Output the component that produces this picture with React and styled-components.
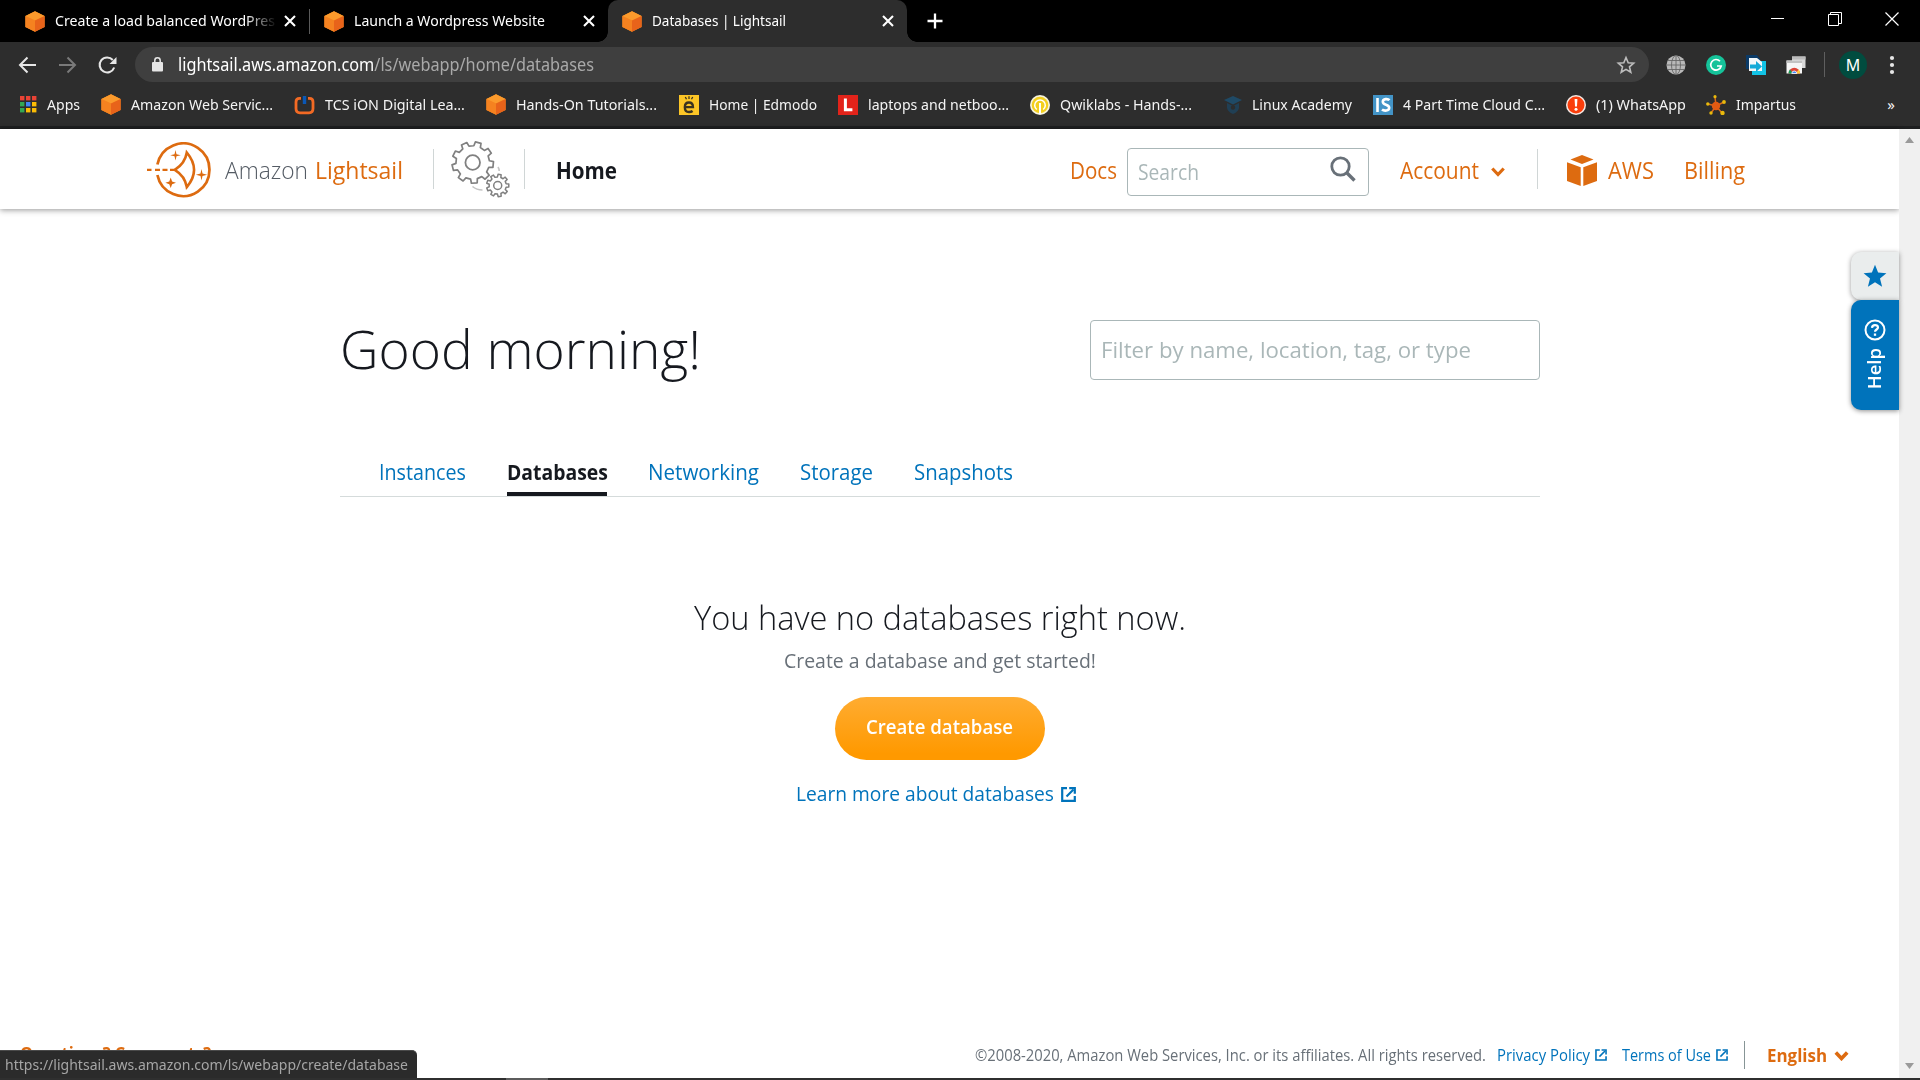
import React from "react";
import styled, { createGlobalStyle, css } from "styled-components";

const Global = createGlobalStyle`
  *, *::before, *::after { box-sizing: border-box; }
  html, body { margin: 0; padding: 0; }
  body { background: #fff; font-family: "Open Sans", "Noto Sans", sans-serif; overflow: hidden; }
  svg { display: block; flex: none; }
  a { text-decoration: none; color: inherit; }
  h1, h2, p { margin: 0; font-weight: inherit; }
`;

const Window = styled.div`
  width: 1920px;
  height: 1080px;
  display: flex;
  flex-direction: column;
  overflow: hidden;
`;

/* A single line of text: $w is its measure, $n the font's own width, condensed to fit. */
const Label = styled.span`
  display: block;
  flex: none;
  white-space: nowrap;
  width: ${(p) => p.$w}px;
  transform: scaleX(${(p) => p.$w / p.$n});
  transform-origin: 0 50%;
`;

/* ---------- browser chrome ---------- */

const TabStrip = styled.div`
  height: 42px;
  flex: none;
  background: #000;
  color: #fff;
  display: flex;
  align-items: stretch;
  padding-left: 10px;
  font: 400 15px "Noto Sans", sans-serif;
`;

const Tab = styled.div`
  display: flex;
  align-items: center;
  width: ${(p) => p.$w}px;
  padding: 0 ${(p) => p.$pr}px 0 ${(p) => p.$pl}px;
  position: relative;
  ${(p) =>
    p.$active &&
    css`
      background: #2d2d2d;
      border-radius: 10px 10px 0 0;
      &::before,
      &::after {
        content: "";
        position: absolute;
        bottom: 0;
        width: 10px;
        height: 10px;
      }
      &::before {
        left: -10px;
        background: radial-gradient(circle at 0 0, transparent 9.5px, #2d2d2d 10px);
      }
      &::after {
        right: -10px;
        background: radial-gradient(circle at 100% 0, transparent 9.5px, #2d2d2d 10px);
      }
    `}
`;

const TabTitle = styled.div`
  flex: 1;
  margin: -2px 0 0 10px;
  overflow: hidden;
  line-height: 24px;
  ${(p) => p.$fade && css`-webkit-mask-image: linear-gradient(90deg, #000 190px, transparent 222px);`}
`;

const TabRule = styled.div`
  width: 1px;
  height: 25px;
  margin: 9px 0 0;
  background: #5a5a5a;
`;

const NewTab = styled.div`
  width: 56px;
  display: grid;
  place-items: center;
`;

const WindowButtons = styled.div`
  margin-left: auto;
  display: flex;
  height: 38px;
  & > div {
    width: 57px;
    display: grid;
    place-items: center;
  }
`;

const Toolbar = styled.div`
  height: 45px;
  flex: none;
  background: #2d2d2d;
  display: flex;
  align-items: center;
  padding-left: 17px;
`;

const NavButton = styled.div`
  width: ${(p) => p.$w || 40}px;
`;

const Address = styled.div`
  width: 1514px;
  height: 35px;
  border-radius: 18px;
  background: #3f3f3f;
  display: flex;
  align-items: center;
  padding: 0 13px 0 17px;
  color: #a9a9a9;
  font: 400 17.5px "Noto Sans", sans-serif;
  line-height: 32px;
  b { font-weight: 400; color: #fff; }
`;

const AddressText = styled.div`
  margin: -2px 0 0 15px;
  flex: 1;
`;

const Extensions = styled.div`
  display: flex;
  align-items: center;
  padding-left: 17px;
`;

const Extension = styled.div`
  width: ${(p) => p.$w || 40}px;
`;

const ToolRule = styled.div`
  width: 1px;
  height: 25px;
  background: #5f5f5f;
  margin-right: 14px;
`;

const Avatar = styled.div`
  width: 28px;
  height: 28px;
  border-radius: 50%;
  background: #014c3f;
  color: #fff;
  font: 400 16px/28px "Noto Sans", sans-serif;
  text-align: center;
  margin-right: 22px;
`;

const Bookmarks = styled.div`
  height: 42px;
  flex: none;
  background: #2d2d2d;
  border-bottom: 3px solid #1e1f20;
  display: flex;
  align-items: center;
  padding: 0 25px 4px 20px;
  color: #f4f4f4;
  font: 400 15px "Noto Sans", sans-serif;
`;

const Bookmark = styled.div`
  display: flex;
  align-items: center;
  gap: 10px;
  margin-right: ${(p) => p.$mr || 21}px;
  line-height: 22px;
  & > span { margin-top: -1px; }
`;

const More = styled.div`
  margin-left: auto;
  line-height: 22px;
  margin-top: -2px;
`;

/* ---------- page ---------- */

const Viewport = styled.div`
  height: 949px;
  flex: none;
  display: flex;
  position: relative;
`;

const Page = styled.div`
  width: 1899px;
  display: flex;
  flex-direction: column;
  color: #16191f;
`;

const Header = styled.header`
  height: 80px;
  flex: none;
  display: flex;
  align-items: center;
  padding: 2px 0 0 147px;
  font-size: 24px;
  line-height: 32px;
  box-shadow: 0 1px 6px rgba(0, 0, 0, 0.42);
  color: #dd6b10;
`;

const HeaderRule = styled.div`
  width: 1px;
  height: 40px;
  margin-top: -2px;
  background: #d0d6d6;
`;

const Brand = styled.div`
  display: flex;
  align-items: center;
  width: 286px;
  gap: 14px;
`;

const BrandName = styled.div`
  display: flex;
  gap: 7px;
  color: #545b64;
  font-weight: 300;
  & > :last-child { color: #dd6b10; font-weight: 400; }
`;

const Gears = styled.div`
  width: 90px;
  padding-left: 16px;
`;

const Home = styled.div`
  margin-left: 31px;
  color: #16191f;
  font-weight: 700;
  width: 514px;
`;

const SearchBox = styled.div`
  width: 242px;
  height: 48px;
  margin: 4px 31px 0 10px;
  padding: 0 12px 2px 10px;
  border: 1px solid #aab7b8;
  border-radius: 4px;
  display: flex;
  align-items: center;
  justify-content: space-between;
  color: #aab7b8;
  font-size: 22px;
  & > svg { margin-bottom: 4px; }
`;

const AccountMenu = styled.div`
  display: flex;
  align-items: center;
  gap: 12px;
  width: 137px;
  & > svg { margin-top: 4px; }
`;

const AwsLink = styled.div`
  display: flex;
  align-items: center;
  gap: 11px;
  margin-left: 29px;
  width: 117px;
`;

const Content = styled.main`
  width: 1200px;
  margin-left: 340px;
  flex: 1;
`;

const TitleRow = styled.div`
  display: flex;
  justify-content: space-between;
  align-items: center;
  height: 60px;
  margin-top: 111px;
`;

const Title = styled.h1`
  font-size: 53px;
  font-weight: 300;
  line-height: 60px;
  margin-top: -3px;
`;

const Filter = styled.div`
  width: 450px;
  height: 60px;
  border: 1px solid #aab7b8;
  border-radius: 4px;
  padding-left: 10px;
  color: #aab7b8;
  font-size: 22.5px;
  line-height: 58px;
`;

const Tabs = styled.nav`
  display: flex;
  margin-top: 66px;
  padding-left: 39px;
  height: 51px;
  gap: 41px;
  border-bottom: 1px solid #d5dbdb;
  font-size: 22px;
`;

const PageTab = styled.a`
  height: 50px;
  line-height: 51px;
  color: ${(p) => (p.$active ? "#16191f" : "#0073bb")};
  font-weight: ${(p) => (p.$active ? 700 : 400)};
  border-bottom: ${(p) => (p.$active ? "4px solid #16191f" : "0")};
`;

const Empty = styled.section`
  display: flex;
  flex-direction: column;
  align-items: center;
  padding-top: 96px;
`;

const EmptyTitle = styled.h2`
  font-size: 33.5px;
  font-weight: 300;
  line-height: 48px;
`;

const EmptyText = styled.p`
  margin-top: 5px;
  font-size: 19.5px;
  line-height: 30px;
  color: #687078;
`;

const CreateButton = styled.button`
  width: 210px;
  height: 63px;
  margin-top: 21px;
  border: 0;
  border-radius: 32px;
  background: linear-gradient(#ffac31, #ff9900 90%);
  color: #fff;
  font: 600 19.5px "Open Sans", sans-serif;
  padding: 0 31px 5px;
  text-align: left;
`;

const LearnMore = styled.a`
  display: flex;
  align-items: center;
  gap: 7px;
  margin: 19px 8px 0 0;
  font-size: 19.5px;
  line-height: 30px;
  color: #0073bb;
`;

const Footer = styled.footer`
  height: 48px;
  display: flex;
  align-items: center;
  padding: 2px 0 0 20px;
  font-size: 15.5px;
  color: #687078;
`;

const Questions = styled.div`
  width: 955px;
  margin-top: -6px;
  color: #dd6b10;
  font-size: 18.5px;
  font-weight: 700;
`;

const FooterLink = styled.a`
  display: flex;
  align-items: center;
  gap: 5px;
  color: #0073bb;
  margin-left: ${(p) => p.$ml}px;
`;

const FooterRule = styled.div`
  width: 1px;
  height: 28px;
  background: #879596;
  margin: 0 22px 0 16px;
`;

const Language = styled.div`
  display: flex;
  align-items: center;
  gap: 7px;
  margin-top: -1px;
  color: #dd6b10;
  font-size: 18px;
  font-weight: 700;
  & > svg { margin-top: 3px; }
`;

const Scrollbar = styled.div`
  width: 21px;
  background: #f0f0f0;
  display: flex;
  flex-direction: column;
  justify-content: space-between;
  align-items: center;
  padding: 8px 0;
`;

const SideDock = styled.aside`
  position: absolute;
  left: 1851px;
  top: 123px;
  width: 48px;
`;

const Favorites = styled.div`
  height: 48px;
  background: #eaeded;
  border-radius: 10px 0 0 10px;
  box-shadow: 0 1px 5px rgba(0, 0, 0, 0.4);
  display: grid;
  place-items: center;
`;

const Help = styled.div`
  position: relative;
  height: 110px;
  background: #0073bb;
  border-radius: 10px 0 0 10px;
  box-shadow: 0 1px 5px rgba(0, 0, 0, 0.45);
  color: #fff;
  display: flex;
  flex-direction: column;
  align-items: center;
  padding-top: 19px;
  gap: 7px;
  font-size: 18.5px;
  font-weight: 600;
`;

const Vertical = styled.span`
  writing-mode: vertical-rl;
  transform: rotate(180deg);
  line-height: 26px;
  margin-right: 2px;
`;

const StatusBubble = styled.div`
  position: absolute;
  left: 0;
  bottom: 0;
  width: 417px;
  height: 28px;
  padding-left: 5px;
  background: #2b2b2b;
  border-top: 1px solid #4a4a4a;
  border-radius: 0 5px 0 0;
  color: #a6a6a6;
  font: 400 15px/27px "Noto Sans", sans-serif;
`;

const Taskbar = styled.div`
  flex: 1;
  background: #2f2f2f;
  padding-left: 506px;
  &::before {
    content: "";
    display: block;
    width: 42px;
    height: 2px;
    background: #5c5c5c;
  }
`;

/* ---------- icons ---------- */

const Cube = () => (
  <svg width="20" height="21" viewBox="0 0 20 21">
    <path d="M10 .3 19.6 5v11L10 20.7.4 16V5z" fill="#f68a1f" />
    <path d="M10 .3 19.6 5 10 9.4.4 5z" fill="#fb9a2c" />
    <path d="M.4 5 10 9.4v11.3L.4 16z" fill="#f58220" />
    <path d="M19.6 5 10 9.4v11.3l9.6-4.7z" fill="#e8631a" />
  </svg>
);

const Close = () => (
  <svg width="12" height="12" viewBox="0 0 12 12" stroke="#fff" strokeWidth="2.1" fill="none">
    <path d="M1 1l10 10M11 1L1 11" />
  </svg>
);

const AppsIcon = () => (
  <svg width="17" height="17" viewBox="0 0 17 17">
    {["#ea4335", "#ea4335", "#ea4335", "#34a853", "#4285f4", "#fbbc05", "#34a853", "#fbbc05", "#fbbc05"].map((c, i) => (
      <rect key={i} x={(i % 3) * 6} y={Math.floor(i / 3) * 6} width="4.4" height="4.4" fill={c} />
    ))}
  </svg>
);

const TcsIcon = () => (
  <svg width="21" height="20" viewBox="0 0 21 20" fill="none">
    <path d="M7 3.300H5.500Q2 3.300 2 7v6.500q0 4.300 4 4.300h9q4 0 4-4.300V7q0-3.700-3.500-3.700H14" stroke="#f36a24" strokeWidth="2.800" />
    <path d="M10.500 1v8" stroke="#0a57b5" strokeWidth="3.400" />
  </svg>
);

const EdmodoIcon = () => (
  <svg width="20" height="20" viewBox="0 0 20 20" fill="none">
    <rect width="20" height="20" fill="#fcc526" />
    <path d="M6 12.200h8c0-3.400-1.600-4.700-4-4.700s-4.200 1.700-4.200 4.700S7.500 17 10 17c1.600 0 2.800-.4 3.600-1" stroke="#3b3320" strokeWidth="2.300" />
    <path d="M6.300 2l1.200 2.300M10 1.300v2.600M13.700 2l-1.200 2.300" stroke="#3b3320" strokeWidth="1.300" />
  </svg>
);

const LIcon = () => (
  <svg width="20" height="20" viewBox="0 0 20 20">
    <rect width="20" height="20" fill="#e2231a" />
    <path d="M7.400 3.500v11.300h7" fill="none" stroke="#fff" strokeWidth="3" />
  </svg>
);

const QwikIcon = () => (
  <svg width="20" height="20" viewBox="0 0 20 20" fill="none">
    <circle cx="10" cy="10" r="10" fill="#f7f3dc" />
    <circle cx="10" cy="10" r="8.300" fill="#f3cf1e" />
    <path d="M6.800 14.500A5.300 5.300 0 1 1 13.200 14.500" stroke="#fff" strokeWidth="1.500" />
    <path d="M10 8v11" stroke="#fff" strokeWidth="2" />
  </svg>
);

const LinuxIcon = () => (
  <svg width="18" height="20" viewBox="0 0 18 20" fill="none">
    <path d="M9 1 18 5 9 9.500 0 5z" fill="#1f4a66" />
    <path d="M3 8v5q1 4 6 6 5-2 6-6V8l-6 3z" fill="#203f54" />
    <circle cx="9" cy="12.500" r="2.200" fill="#2d2d2d" />
  </svg>
);

const IsIcon = () => (
  <svg width="20" height="20" viewBox="0 0 20 20" fill="none">
    <rect width="20" height="20" fill="#4394c7" />
    <path d="M4.500 3v14M16.500 5.200C15 3.600 9.800 3.500 9.800 6.800c0 3.600 6.400 2.400 6.400 6 0 3.300-5.200 3.400-7.200 1.700" stroke="#fff" strokeWidth="2.600" />
  </svg>
);

const AlertIcon = () => (
  <svg width="20" height="20" viewBox="0 0 20 20">
    <circle cx="10" cy="10" r="10" fill="#f5e9e4" />
    <circle cx="10" cy="10" r="8.500" fill="#fa3e0c" />
    <path d="M8.600 4h2.800l-.4 7.600H9z" fill="#fff" />
    <circle cx="10" cy="14.300" r="1.500" fill="#fff" />
  </svg>
);

const ImpartusIcon = () => (
  <svg width="20" height="20" viewBox="0 0 20 20" fill="none">
    <path d="M10 11 9 2M10 11 18 7M10 11 2 9M10 11 5 18M10 11l6 7" stroke="#d9691a" strokeWidth="1.500" />
    <circle cx="10" cy="11" r="4.200" fill="#e35a12" />
    <g fill="#e8b90c">
      <circle cx="9" cy="1.700" r="1.600" /><circle cx="18" cy="7" r="1.900" /><circle cx="1.800" cy="9" r="1.700" />
      <circle cx="5" cy="18" r="1.700" /><circle cx="16.500" cy="18" r="2.200" />
    </g>
  </svg>
);

const LightsailLogo = () => (
  <svg width="64" height="56" viewBox="0 0 64 56" fill="none" stroke="#dd6b10">
    <path d="M10.400 22.500A26.300 26.300 0 1 1 10.400 33" strokeWidth="2.700" />
    <path d="M0 27.800h4.500M8 27.800h5M15.500 27.800h5M23 27.800h6" strokeWidth="2.300" />
    <path d="M39.800 10.500q14.500 17.300 0 34.600Q38 34 27.800 27.800 38 21.600 39.800 10.500z" strokeWidth="2.600" />
    <g fill="#dd6b10" stroke="none">
      <path d="M28.500 8l1 4.300 4.300 1-4.300 1-1 4.300-1-4.300-4.300-1 4.300-1z" />
      <path d="M23.700 35.500l1.400 3.900 3.900 1.400-3.900 1.400-1.400 3.900-1.400-3.900-3.900-1.400 3.900-1.400z" />
      <path d="M54.500 27l1 4.600 4.600 1.200-4.600 1.200-1 4.600-1-4.600-4.600-1.200 4.600-1.200z" />
    </g>
  </svg>
);

const gearPath = (cx, cy, outer, inner, teeth, turn) => {
  const pts = [];
  for (let i = 0; i < teeth; i++) {
    [[-0.29, inner], [-0.2, outer], [0.2, outer], [0.29, inner]].forEach(([o, r]) => {
      const a = ((i + o) / teeth) * Math.PI * 2 + turn;
      pts.push(`${(cx + r * Math.cos(a)).toFixed(2)} ${(cy + r * Math.sin(a)).toFixed(2)}`);
    });
  }
  return `M${pts.join("L")}z`;
};

const GearsIcon = () => (
  <svg width="60" height="58" viewBox="0 0 60 58" fill="none" stroke="#808080" strokeLinejoin="round">
    <path d={gearPath(22.7, 21.5, 20.8, 16.8, 9, -1.3)} strokeWidth="1.700" />
    <circle cx="22.700" cy="21.500" r="7.300" strokeWidth="1.800" />
    <path d={gearPath(47.700, 44.500, 11.200, 8.600, 9, -1.4)} strokeWidth="1.500" />
    <circle cx="47.700" cy="44.500" r="4" strokeWidth="1.500" />
    <path d="M22.500 45.500q4 3.500 10 3.500M48 26q1.200 2 1.200 4" stroke="#c4c4c4" strokeWidth="1.600" />
  </svg>
);

const AwsCube = () => (
  <svg width="30" height="31" viewBox="0 0 30 31" fill="#dd6b10">
    <path d="M15 0 26.500 4.600 15 9 3.500 4.600z" />
    <path d="M0 7.300 13.700 12.300V31L0 26z" />
    <path d="M30 7.300 16.300 12.300V31L30 26z" />
  </svg>
);

const Chevron = ({ w = 14, h = 10, sw = 3.2 }) => (
  <svg width={w} height={h} viewBox="0 0 14 10" fill="none" stroke="#dd6b10" strokeWidth={sw}>
    <path d="M1.300 1.500 7 7.500 12.700 1.500" />
  </svg>
);

const ExternalIcon = ({ s = 15, sw = 2.2 }) => (
  <svg width={s} height={s} viewBox="0 0 15 15" fill="none" stroke="#0073bb" strokeWidth={sw}>
    <path d="M6 1.200H1.200v12.600h12.600V9" />
    <path d="M5.500 9.500 12.500 2.500" />
    <path d="M8.200 1.200h5.600v5.600" />
  </svg>
);

const bookmarks = [
  { name: "Apps", Icon: AppsIcon, w: 33, n: 35.2, mr: 21 },
  { name: "Amazon Web Servic...", Icon: Cube, w: 142, n: 150.2 },
  { name: "TCS iON Digital Lea...", Icon: TcsIcon, w: 140, n: 146.9 },
  { name: "Hands-On Tutorials...", Icon: Cube, w: 141, n: 147.9, mr: 22 },
  { name: "Home | Edmodo", Icon: EdmodoIcon, w: 108, n: 117.7 },
  { name: "laptops and netboo...", Icon: LIcon, w: 141, n: 149.7 },
  { name: "Qwiklabs - Hands-...", Icon: QwikIcon, w: 132, n: 138.8, mr: 32 },
  { name: "Linux Academy", Icon: LinuxIcon, w: 100, n: 106.7 },
  { name: "4 Part Time Cloud C...", Icon: IsIcon, w: 142, n: 150.4 },
  { name: "(1) WhatsApp", Icon: AlertIcon, w: 90, n: 93.8, mr: 20 },
  { name: "Impartus", Icon: ImpartusIcon, w: 60, n: 64.8 },
];

const pageTabs = [
  { name: "Instances", w: 87, n: 97.1 },
  { name: "Databases", w: 100, n: 113.5 },
  { name: "Networking", w: 111, n: 118.6 },
  { name: "Storage", w: 73, n: 78.7 },
  { name: "Snapshots", w: 99, n: 106.8 },
];

export default function App() {
  return (
    <Window>
      <Global />
      <TabStrip>
        <Tab $w={299} $pl={15} $pr={13}>
          <Cube />
          <TabTitle $fade><Label $w={220} $n={233.3}>Create a load balanced WordPres</Label></TabTitle>
          <Close />
        </Tab>
        <TabRule />
        <Tab $w={298} $pl={14} $pr={13}>
          <Cube />
          <TabTitle><Label $w={191} $n={203.5}>Launch a Wordpress Website</Label></TabTitle>
          <Close />
        </Tab>
        <Tab $w={299} $pl={14} $pr={13} $active>
          <Cube />
          <TabTitle><Label $w={134} $n={148.7}>Databases | Lightsail</Label></TabTitle>
          <Close />
        </Tab>
        <NewTab>
          <svg width="16" height="16" viewBox="0 0 16 16" stroke="#fff" strokeWidth="2.300"><path d="M8 .5v15M.5 8h15" /></svg>
        </NewTab>
        <WindowButtons>
          <div><svg width="13" height="13" viewBox="0 0 13 13" stroke="#fff"><path d="M0 5.500h13" /></svg></div>
          <div><svg width="14" height="14" viewBox="0 0 14 14" stroke="#fff" fill="none"><path d="M.5 2.500h10v11H.5zM2.500 2.500v-2h11v11h-3" /></svg></div>
          <div><svg width="14" height="14" viewBox="0 0 14 14" stroke="#fff" strokeWidth="1.200"><path d="M.5.5l13 13M13.500.5l-13 13" /></svg></div>
        </WindowButtons>
      </TabStrip>
      <Toolbar>
        <NavButton>
          <svg width="20" height="20" viewBox="0 0 20 20" fill="none" stroke="#e6e6e6" strokeWidth="2"><path d="M19 10H3M10.500 2.500 3 10l7.500 7.500" /></svg>
        </NavButton>
        <NavButton>
          <svg width="20" height="20" viewBox="0 0 20 20" fill="none" stroke="#7a7a7a" strokeWidth="2"><path d="M2 10h16M10.500 2.500 18 10l-7.500 7.500" /></svg>
        </NavButton>
        <NavButton $w={38}>
          <svg width="20" height="20" viewBox="0 0 20 20" fill="none" stroke="#e6e6e6" strokeWidth="2.100"><path d="M17.200 12.500A7.500 7.500 0 1 1 15.800 5" /><path d="M19.500 2v7h-7z" fill="#e6e6e6" stroke="none" /></svg>
        </NavButton>
        <Address>
          <svg width="11" height="15" viewBox="0 0 11 15"><rect y="5" width="11" height="9.500" rx="1" fill="#e6e6e6" /><path d="M2.800 6V3.500a2.700 2.700 0 0 1 5.400 0V6" fill="none" stroke="#e6e6e6" strokeWidth="1.500" /></svg>
          <AddressText>
            <Label $w={416} $n={447.4}><b>lightsail.aws.amazon.com</b>/ls/webapp/home/databases</Label>
          </AddressText>
          <svg width="20" height="20" viewBox="0 0 20 20" fill="none" stroke="#bdbdbd" strokeWidth="1.600"><path d="M10 2.500l2.200 5.200 5.500.5-4.200 3.700 1.300 5.400-4.800-2.900-4.800 2.900 1.300-5.400L2.300 8.200l5.500-.5z" /></svg>
        </Address>
        <Extensions>
          <Extension>
            <svg width="20" height="20" viewBox="0 0 20 20" fill="none"><circle cx="10" cy="10" r="9.500" fill="#b9b9b9" /><g stroke="#666" strokeWidth=".9"><ellipse cx="10" cy="10" rx="4.500" ry="9.500" /><path d="M10 .5v19M.5 10h19M2 5.500h16M2 14.500h16" /></g></svg>
          </Extension>
          <Extension>
            <svg width="20" height="20" viewBox="0 0 20 20" fill="none"><circle cx="10" cy="10" r="10" fill="#15c39a" /><path d="M14 6.300A5.300 5.300 0 1 0 15.200 11H11" stroke="#fff" strokeWidth="1.700" /></svg>
          </Extension>
          <Extension>
            <svg width="20" height="20" viewBox="0 0 20 20"><path d="M0 0h11l3 4v10H0z" fill="#0b3a66" /><path d="M6 6h14v14H6z" fill="#12c3e6" /><path d="M3 3h8l5 4v9H3z" fill="#f2f7fa" /><path d="M4 9.500h6V6l6 5.500-6 5.500v-3.500H4z" fill="#12a9d8" /></svg>
          </Extension>
          <Extension $w={38}>
            <svg width="20" height="18" viewBox="0 0 20 18"><path d="M6 .5h13.500V12H6z" fill="#d9d9d9" /><path d="M6 .5h13.500v3H6z" fill="#bbb" /><path d="M.5 4.500h15.500V17.500H.5z" fill="#f5f5f5" /><path d="M.5 4.500H16v2.500H.5z" fill="#c2c2c2" /><path d="M2.500 17.500a5.800 5.800 0 0 1 11.600 0z" fill="#db4437" /><path d="M2.500 17.500q0-2.500 1.500-4l3 4z" fill="#0f9d58" /><path d="M14.100 17.500q0-2.500-1.500-4l-3 4z" fill="#ffcd40" /><path d="M5.800 17.500a2.500 2.500 0 0 1 5 0z" fill="#4285f4" stroke="#fff" strokeWidth=".8" /></svg>
          </Extension>
          <ToolRule />
          <Avatar>M</Avatar>
          <svg width="6" height="20" viewBox="0 0 6 20" fill="#e6e6e6"><circle cx="3" cy="3" r="2.100" /><circle cx="3" cy="10" r="2.100" /><circle cx="3" cy="17" r="2.100" /></svg>
        </Extensions>
      </Toolbar>
      <Bookmarks>
        {bookmarks.map(({ name, Icon, w, n, mr }) => (
          <Bookmark key={name} $mr={mr}>
            <Icon />
            <Label $w={w} $n={n}>{name}</Label>
          </Bookmark>
        ))}
        <More>»</More>
      </Bookmarks>
      <Viewport>
        <Page>
          <Header>
            <Brand>
              <LightsailLogo />
              <BrandName>
                <Label $w={83} $n={87.7}>Amazon</Label>
                <Label $w={88} $n={91.8}>Lightsail</Label>
              </BrandName>
            </Brand>
            <HeaderRule />
            <Gears><GearsIcon /></Gears>
            <HeaderRule />
            <Home><Label $w={61} $n={71}>Home</Label></Home>
            <Label $w={47} $n={54.8}>Docs</Label>
            <SearchBox>
              <Label $w={61} $n={69.7}>Search</Label>
              <svg width="26" height="26" viewBox="0 0 26 26" fill="none" stroke="#687078" strokeWidth="2.800"><circle cx="10.500" cy="10.500" r="8.700" /><path d="M16.500 16.500l8 8" strokeWidth="3.400" /></svg>
            </SearchBox>
            <AccountMenu><Label $w={79} $n={90.6}>Account</Label><Chevron /></AccountMenu>
            <HeaderRule />
            <AwsLink><AwsCube /><Label $w={46} $n={50.5}>AWS</Label></AwsLink>
            <Label $w={61} $n={67.5}>Billing</Label>
          </Header>
          <Content>
            <TitleRow>
              <Title><Label $w={361} $n={359.2}>Good morning!</Label></Title>
              <Filter><Label $w={370} $n={374.9}>Filter by name, location, tag, or type</Label></Filter>
            </TitleRow>
            <Tabs>
              {pageTabs.map(({ name, w, n }) => (
                <PageTab key={name} $active={name === "Databases"}>
                  <Label $w={w} $n={n}>{name}</Label>
                </PageTab>
              ))}
            </Tabs>
            <Empty>
              <EmptyTitle><Label $w={492} $n={505.9}>You have no databases right now.</Label></EmptyTitle>
              <EmptyText><Label $w={312} $n={312.9}>Create a database and get started!</Label></EmptyText>
              <CreateButton><Label $w={147} $n={154}>Create database</Label></CreateButton>
              <LearnMore><Label $w={258} $n={262.1}>Learn more about databases</Label><ExternalIcon /></LearnMore>
            </Empty>
          </Content>
          <Footer>
            <Questions><Label $w={191} $n={215.8}>Questions? Comments?</Label></Questions>
            <Label $w={511} $n={536.2}>©2008-2020, Amazon Web Services, Inc. or its affiliates. All rights reserved.</Label>
            <FooterLink $ml={11}><Label $w={93} $n={96.8}>Privacy Policy</Label><ExternalIcon s={12} sw={2} /></FooterLink>
            <FooterLink $ml={15}><Label $w={89} $n={95.3}>Terms of Use</Label><ExternalIcon s={12} sw={2} /></FooterLink>
            <FooterRule />
            <Language><Label $w={60} $n={63.8}>English</Label><Chevron w={15} h={10} sw={3.6} /></Language>
          </Footer>
        </Page>
        <Scrollbar>
          <svg width="9" height="7" viewBox="0 0 9 7" fill="#9a9a9a"><path d="M0 6h9L4.500 0z" /></svg>
          <svg width="9" height="7" viewBox="0 0 9 7" fill="#9a9a9a"><path d="M0 0h9L4.500 6z" /></svg>
        </Scrollbar>
        <SideDock>
          <Favorites>
            <svg width="24" height="24" viewBox="0 0 24 24" fill="#0073bb"><path d="M12 .8l3.100 7.800 8.300.6-6.400 5.300 2.100 8.200-7.100-4.500-7.100 4.500L7 14.500.6 9.200l8.300-.6z" /></svg>
          </Favorites>
          <Help>
            <svg width="22" height="22" viewBox="0 0 22 22" fill="none" stroke="#fff" strokeWidth="2"><circle cx="11" cy="11" r="9.500" /><path d="M8 8.800q.2-2.600 3-2.600t3 2.300c0 2-3 2-3 4.300" strokeWidth="2.200" /><path d="M11 14.500v2.300" strokeWidth="2.300" /></svg>
            <Vertical>Help</Vertical>
          </Help>
        </SideDock>
        <StatusBubble><Label $w={403} $n={431}>https://lightsail.aws.amazon.com/ls/webapp/create/database</Label></StatusBubble>
      </Viewport>
      <Taskbar />
    </Window>
  );
}
